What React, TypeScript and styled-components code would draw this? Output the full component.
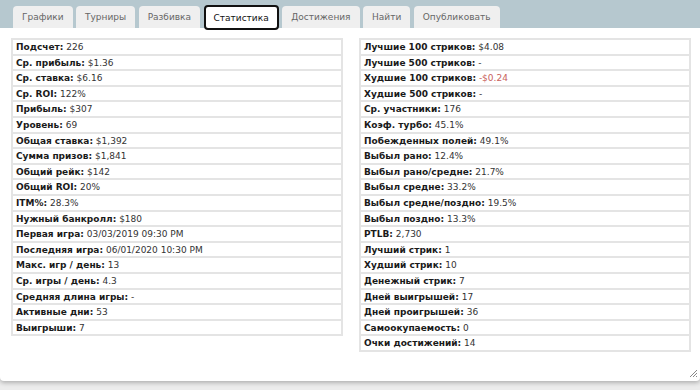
import React from "react";
import styled, { createGlobalStyle } from "styled-components";

const Global = createGlobalStyle`
  html, body { margin: 0; padding: 0; background: #ececec; }
  body { font-family: "DejaVu Sans", Verdana, sans-serif; width: 700px; height: 390px; overflow: hidden; }
`;

const Page = styled.div`
  width: 700px;
  height: 390px;
  display: flex;
  flex-direction: column;
  background: #ececec;
`;

const Panel = styled.div`
  position: relative;
  height: 381px;
  background: #fff;
  border-radius: 0 0 4px 4px;
  box-shadow: 0 2px 4px rgba(0, 0, 0, 0.25);
  display: flex;
  flex-direction: column;
`;

const TabBar = styled.div`
  height: 28px;
  background: #b6c8cf;
  display: flex;
  align-items: flex-end;
  padding-left: 13px;
  gap: 3.5px;
`;

const Tab = styled.div<{ $active?: boolean }>`
  box-sizing: border-box;
  height: ${(p) => (p.$active ? "25px" : "22px")};
  margin-bottom: ${(p) => (p.$active ? "-2px" : "0")};
  padding: 0 ${(p) => (p.$active ? "8px" : "9px")};
  display: flex;
  align-items: center;
  justify-content: center;
  font-size: 9px;
  color: ${(p) => (p.$active ? "#111" : "#666")};
  background: ${(p) => (p.$active ? "#fff" : "#efefef")};
  border: ${(p) => (p.$active ? "2px solid #111" : "none")};
  border-radius: ${(p) => (p.$active ? "4px" : "4px 4px 0 0")};
  position: relative;
  z-index: 1;
`;

const Content = styled.div`
  display: grid;
  grid-template-columns: 332px 332px;
  column-gap: 16px;
  align-items: start;
  padding: 10px 9px 0 11px;
`;

const Table = styled.div`
  border: 2px solid #e4e4e4;
  border-bottom: none;
  display: flex;
  flex-direction: column;
`;

const Row = styled.div`
  height: 13.6px;
  line-height: 14px;
  border-bottom: 2px solid #e4e4e4;
  padding-left: 3px;
  font-size: 9px;
  white-space: nowrap;
`;

const Label = styled.span`
  font-weight: bold;
  color: #1a1a1a;
`;

const Value = styled.span<{ $neg?: boolean }>`
  color: ${(p) => (p.$neg ? "#c9615c" : "#333")};
`;

const Grip = styled.svg`
  position: absolute;
  right: 2px;
  bottom: 3px;
`;

const tabs = ["Графики", "Турниры", "Разбивка", "Статистика", "Достижения", "Найти", "Опубликовать"];

type Item = [string, string, boolean?];

const left: Item[] = [
  ["Подсчет", "226"],
  ["Ср. прибыль", "$1.36"],
  ["Ср. ставка", "$6.16"],
  ["Ср. ROI", "122%"],
  ["Прибыль", "$307"],
  ["Уровень", "69"],
  ["Общая ставка", "$1,392"],
  ["Сумма призов", "$1,841"],
  ["Общий рейк", "$142"],
  ["Общий ROI", "20%"],
  ["ITM%", "28.3%"],
  ["Нужный банкролл", "$180"],
  ["Первая игра", "03/03/2019 09:30 PM"],
  ["Последняя игра", "06/01/2020 10:30 PM"],
  ["Макс. игр / день", "13"],
  ["Ср. игры / день", "4.3"],
  ["Средняя длина игры", "-"],
  ["Активные дни", "53"],
  ["Выигрыши", "7"],
];

const right: Item[] = [
  ["Лучшие 100 стриков", "$4.08"],
  ["Лучшие 500 стриков", "-"],
  ["Худшие 100 стриков", "-$0.24", true],
  ["Худшие 500 стриков", "-"],
  ["Ср. участники", "176"],
  ["Коэф. турбо", "45.1%"],
  ["Побежденных полей", "49.1%"],
  ["Выбыл рано", "12.4%"],
  ["Выбыл рано/средне", "21.7%"],
  ["Выбыл средне", "33.2%"],
  ["Выбыл средне/поздно", "19.5%"],
  ["Выбыл поздно", "13.3%"],
  ["PTLB", "2,730"],
  ["Лучший стрик", "1"],
  ["Худший стрик", "10"],
  ["Денежный стрик", "7"],
  ["Дней выигрышей", "17"],
  ["Дней проигрышей", "36"],
  ["Самоокупаемость", "0"],
  ["Очки достижений", "14"],
];

const StatTable = ({ items }: { items: Item[] }) => (
  <Table>
    {items.map(([l, v, neg]) => (
      <Row key={l}>
        <Label>{l}:</Label> <Value $neg={neg}>{v}</Value>
      </Row>
    ))}
  </Table>
);

export default function App() {
  return (
    <Page>
      <Global />
      <Panel>
        <TabBar>
          {tabs.map((t) => (
            <Tab key={t} $active={t === "Статистика"}>
              {t}
            </Tab>
          ))}
        </TabBar>
        <Content>
          <StatTable items={left} />
          <StatTable items={right} />
        </Content>
        <Grip width="9" height="9" viewBox="0 0 9 9">
          <path d="M8 1 L1 8 M8 4 L4 8 M8 7 L7 8" stroke="#888" strokeWidth="1" />
        </Grip>
      </Panel>
    </Page>
  );
}
